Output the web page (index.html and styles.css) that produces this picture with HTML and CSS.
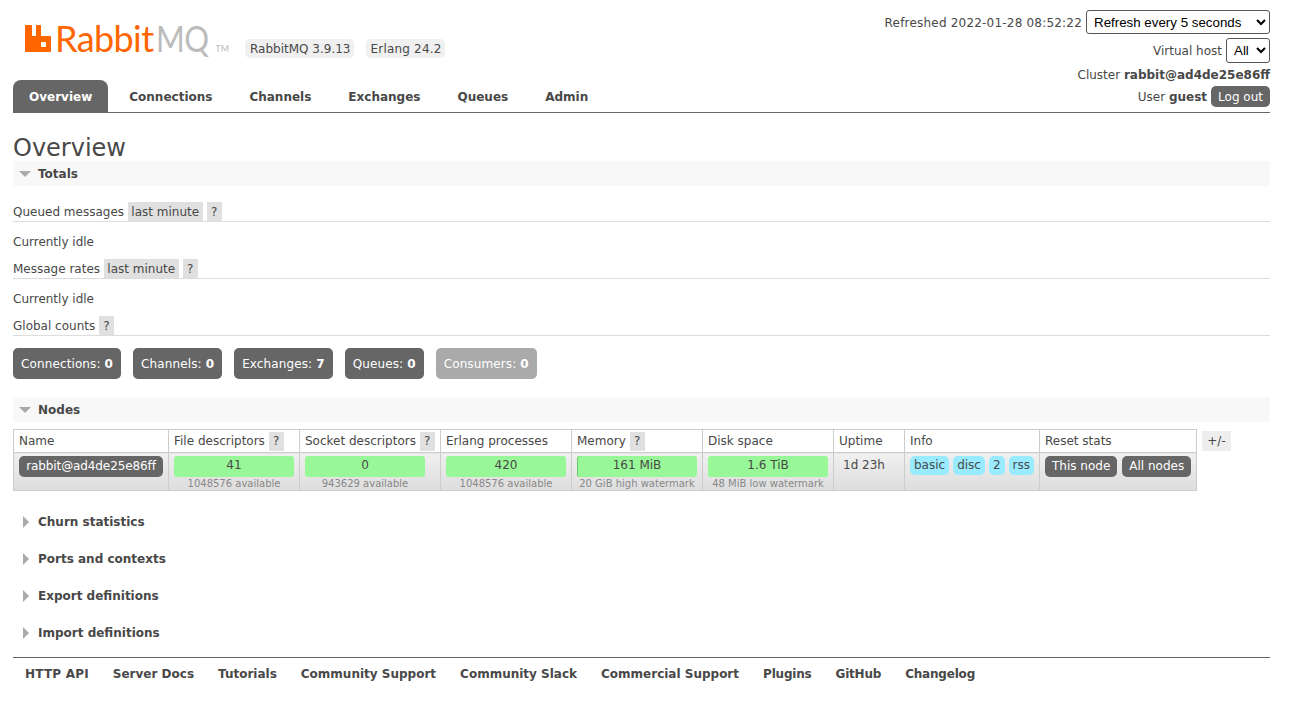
FILE: index.html
```html
<!DOCTYPE html>
<html lang="en">
<head>
    <meta charset="UTF-8">
    <title>RabbitMQ Management</title>
    <link rel="stylesheet" href="styles.css">
</head>
<body>
    <div class="header">
        <div class="header-left">
            <div class="brand">
                <div class="logo">
                    <svg class="logo-icon" width="26" height="27" viewBox="0 0 26 27">
                        <path fill="#f60" d="M0 1C0 .4.4 0 1 0h5c.6 0 1 .4 1 1v10h4V1c0-.6.4-1 1-1h3c.6 0 1 .4 1 1v10h9c.6 0 1 .4 1 1v14c0 .6-.4 1-1 1H1c-.6 0-1-.4-1-1z"/>
                        <rect fill="#fff" x="16" y="17" width="5" height="5" rx="1"/>
                    </svg>
                    <span class="logo-rabbit">Rabbit</span><span class="logo-mq">MQ</span><span class="logo-tm">TM</span>
                </div>
                <span class="version">RabbitMQ 3.9.13</span>
                <span class="version version-erlang">Erlang 24.2</span>
            </div>
            <ul class="tabs">
                <li class="active">Overview</li>
                <li>Connections</li>
                <li>Channels</li>
                <li>Exchanges</li>
                <li>Queues</li>
                <li>Admin</li>
            </ul>
        </div>
        <div class="header-right">
            <div class="meta-row">
                <span class="refreshed">Refreshed 2022-01-28 08:52:22</span>
                <select class="refresh-select"><option>Refresh every 5 seconds</option></select>
            </div>
            <div class="meta-row">
                <span>Virtual host</span>
                <select class="vhost-select"><option>All</option></select>
            </div>
            <div class="meta-row">
                <span>Cluster <b>rabbit@ad4de25e86ff</b></span>
            </div>
            <div class="meta-row">
                <span>User <b>guest</b></span>
                <span class="btn">Log out</span>
            </div>
        </div>
    </div>

    <h1>Overview</h1>

    <div class="section-bar"><span class="arrow-down"></span>Totals</div>
    <div class="totals">
        <div class="sub-head">Queued messages <span class="tag">last minute</span><span class="tag tag-help">?</span></div>
        <div class="idle">Currently idle</div>
        <div class="sub-head">Message rates <span class="tag">last minute</span><span class="tag tag-help">?</span></div>
        <div class="idle">Currently idle</div>
        <div class="sub-head">Global counts <span class="tag tag-help">?</span></div>
        <div class="tiles">
            <span class="tile">Connections: <b>0</b></span>
            <span class="tile">Channels: <b>0</b></span>
            <span class="tile">Exchanges: <b>7</b></span>
            <span class="tile">Queues: <b>0</b></span>
            <span class="tile tile-off">Consumers: <b>0</b></span>
        </div>
    </div>

    <div class="section-bar"><span class="arrow-down"></span>Nodes</div>
    <div class="nodes">
        <table class="node-table">
            <thead>
                <tr>
                    <th class="c-name">Name</th>
                    <th class="c-res">File descriptors <span class="tag tag-help">?</span></th>
                    <th class="c-socket">Socket descriptors <span class="tag tag-help">?</span></th>
                    <th class="c-res">Erlang processes</th>
                    <th class="c-res">Memory <span class="tag tag-help">?</span></th>
                    <th class="c-res">Disk space</th>
                    <th class="c-up">Uptime</th>
                    <th class="c-info">Info</th>
                    <th>Reset stats</th>
                </tr>
            </thead>
            <tbody>
                <tr>
                    <td><span class="btn node-btn">rabbit@ad4de25e86ff</span></td>
                    <td><div class="meter"><div class="bar">41</div><div class="sub">1048576 available</div></div></td>
                    <td><div class="meter"><div class="bar">0</div><div class="sub">943629 available</div></div></td>
                    <td><div class="meter"><div class="bar">420</div><div class="sub">1048576 available</div></div></td>
                    <td><div class="meter"><div class="bar bar-mem">161 MiB</div><div class="sub">20 GiB high watermark</div></div></td>
                    <td><div class="meter"><div class="bar">1.6 TiB</div><div class="sub">48 MiB low watermark</div></div></td>
                    <td class="uptime">1d 23h</td>
                    <td><div class="badges"><span class="badge">basic</span><span class="badge">disc</span><span class="badge">2</span><span class="badge">rss</span></div></td>
                    <td><div class="reset"><span class="btn">This node</span><span class="btn">All nodes</span></div></td>
                </tr>
            </tbody>
        </table>
        <span class="plus-minus">+/-</span>
    </div>

    <div class="section-closed"><span class="arrow-right"></span>Churn statistics</div>
    <div class="section-closed"><span class="arrow-right"></span>Ports and contexts</div>
    <div class="section-closed"><span class="arrow-right"></span>Export definitions</div>
    <div class="section-closed"><span class="arrow-right"></span>Import definitions</div>

    <ul class="footer">
        <li>HTTP API</li>
        <li>Server Docs</li>
        <li>Tutorials</li>
        <li>Community Support</li>
        <li>Community Slack</li>
        <li>Commercial Support</li>
        <li>Plugins</li>
        <li>GitHub</li>
        <li>Changelog</li>
    </ul>
</body>
</html>
```
FILE: styles.css
```css
* {
    box-sizing: border-box;
}
body {
    margin: 0;
    padding: 0 23px 0 13px;
    font-family: "DejaVu Sans", Verdana, sans-serif;
    font-size: 12px;
    color: #484848;
    background: #fff;
}

/* header */
.header {
    display: flex;
    justify-content: space-between;
    height: 113px;
    border-bottom: 1px solid #666;
}
.brand {
    display: flex;
    align-items: flex-start;
    height: 80px;
    padding: 22px 0 0 12px;
}
.logo {
    display: flex;
    align-items: baseline;
    width: 220px;
    height: 34px;
    margin-top: -1px;
    font-family: Lato, sans-serif;
    font-weight: 400;
    font-size: 36px;
    line-height: 34px;
    letter-spacing: -0.6px;
}
.logo-icon {
    align-self: flex-start;
    margin: 4px 4px 0 0;
    flex: none;
}
.logo-rabbit {
    color: #f60;
}
.logo-mq {
    display: inline-block;
    width: 54px;
    margin-left: 3px;
    color: #bbb;
    transform: scaleX(0.86);
    transform-origin: left;
}
.logo-tm {
    color: #bbb;
    font-size: 9px;
    letter-spacing: 0;
    margin-left: 5px;
}
.version {
    margin: 17px 12px 0 0;
    padding: 0 4px 0 5px;
    height: 19px;
    line-height: 21px;
    background: #f0f0f0;
    border-radius: 5px;
}
.version-erlang {
    letter-spacing: 0.2px;
    padding: 0 3px 0 4px;
}
.tabs {
    display: flex;
    gap: 5px;
    list-style: none;
    margin: 0;
    padding: 0;
}
.tabs li {
    padding: 0 16px;
    height: 32px;
    line-height: 35px;
    font-weight: bold;
}
.tabs .active {
    background: #666;
    color: #fff;
    border-radius: 8px 8px 0 0;
}
.header-right {
    display: flex;
    flex-direction: column;
    align-items: flex-end;
    padding-top: 10px;
}
.meta-row {
    display: flex;
    align-items: center;
    gap: 4px;
    white-space: nowrap;
}
.meta-row:nth-child(1) {
    height: 24px;
    margin-bottom: 4px;
}
.meta-row:nth-child(2) {
    height: 25px;
    margin-bottom: 2px;
}
.meta-row:nth-child(3) {
    height: 20px;
    margin-bottom: 1px;
}
.meta-row:nth-child(4) {
    height: 21px;
}
.refreshed {
    padding-top: 1px;
    letter-spacing: 0.2px;
}
select {
    font-family: "Liberation Sans", Arial, sans-serif;
    font-size: 13.33px;
    height: 24px;
    color: #000;
    background: #fff;
    border: 1px solid #555;
    border-radius: 3px;
    padding-left: 3px;
}
.refresh-select {
    width: 184px;
}
.vhost-select {
    width: 44px;
    height: 25px;
}
.btn {
    display: inline-block;
    padding: 0 7px;
    height: 21px;
    line-height: 22px;
    background: #666;
    color: #fff;
    border-radius: 5px;
}

/* sections */
h1 {
    margin: 0;
    padding-top: 21px;
    height: 48px;
    font-size: 24px;
    line-height: 28px;
    font-weight: normal;
}
.section-bar {
    display: flex;
    align-items: center;
    height: 25px;
    padding-left: 6px;
    background: #f8f8f8;
    font-weight: bold;
}
.arrow-down {
    width: 0;
    height: 0;
    margin-right: 7px;
    border-left: 6px solid transparent;
    border-right: 6px solid transparent;
    border-top: 6px solid #aaa;
}
.totals {
    padding-top: 16px;
    margin-bottom: 18px;
}
.sub-head {
    height: 20px;
    line-height: 21px;
    border-bottom: 1px solid #ddd;
}
.tag {
    display: inline-block;
    vertical-align: top;
    height: 19px;
    line-height: 21px;
    padding: 0 3.5px;
    margin-right: 4px;
    background: #e0e0e0;
    font-weight: normal;
}
.tag-help {
    min-width: 15px;
    text-align: center;
    margin-right: 0;
}
.idle {
    height: 37px;
    padding-top: 10px;
    line-height: 20px;
}
.tiles {
    display: flex;
    gap: 12px;
    margin-top: 12px;
}
.tile {
    height: 31px;
    line-height: 32px;
    padding: 0 8px;
    background: #666;
    color: #fff;
    border-radius: 5px;
    letter-spacing: 0.12px;
}
.tile-off {
    background: #aaa;
}

/* nodes table */
.nodes {
    display: flex;
    align-items: flex-start;
    margin: 7px 0 12px;
}
.node-table {
    border-collapse: collapse;
    table-layout: fixed;
    width: 1184px;
}
.node-table th {
    height: 23px;
    padding: 0 5px;
    line-height: 19px;
    font-weight: normal;
    text-align: left;
    border: 1px solid #ccc;
    background: #fff;
    white-space: nowrap;
}
.node-table th .tag {
    line-height: 19px;
}
.node-table td {
    height: 38px;
    padding: 3px 5px 0;
    vertical-align: top;
    border: 1px solid #ccc;
    background: linear-gradient(#f0f0f0, #ddd);
    white-space: nowrap;
}
.node-table td .btn {
    line-height: 21px;
}
.c-name {
    width: 155px;
}
.c-res {
    width: 131px;
}
.c-socket {
    width: 141px;
}
.c-up {
    width: 71px;
}
.c-info {
    width: 135px;
}
.node-btn {
    display: block;
    padding: 0;
    text-align: center;
    letter-spacing: -0.1px;
}
.meter {
    width: 120px;
}
.bar {
    height: 21px;
    line-height: 19px;
    text-align: center;
    background: #98f898;
    border-radius: 3px;
}
.bar-mem {
    box-shadow: inset 1px 0 0 #6c6;
}
.sub {
    font-size: 10px;
    line-height: 13px;
    text-align: center;
    color: #888;
}
.node-table td.uptime {
    padding: 5px 0 0 9px;
}
.badges {
    display: flex;
    gap: 4px;
}
.badge {
    height: 19px;
    line-height: 19px;
    padding: 0 4px;
    background: #99ebff;
    border-radius: 5px;
}
.reset {
    display: flex;
    gap: 5px;
}
.plus-minus {
    margin: 2px 0 0 5px;
    width: 29px;
    height: 20px;
    line-height: 20px;
    text-align: center;
    background: #eee;
}
.section-closed {
    display: flex;
    align-items: center;
    height: 37px;
    padding-left: 10px;
    font-weight: bold;
}
.arrow-right {
    width: 0;
    height: 0;
    margin-right: 9px;
    border-top: 6px solid transparent;
    border-bottom: 6px solid transparent;
    border-left: 6px solid #aaa;
}

/* footer */
.footer {
    display: flex;
    gap: 24px;
    list-style: none;
    margin: 6px 0 0;
    padding: 9px 0 0 12px;
    border-top: 1px solid #666;
    font-weight: bold;
}
.footer li:first-child {
    letter-spacing: 0.2px;
}
.footer li:nth-child(n+7) {
    letter-spacing: -0.2px;
}
```
